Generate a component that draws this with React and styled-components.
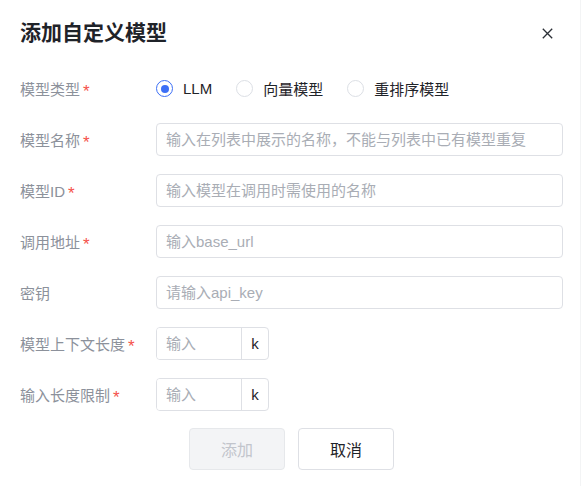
import React, { useState } from 'react';
import styled, { createGlobalStyle } from 'styled-components';

const GlobalStyle = createGlobalStyle`
  html, body {
    margin: 0;
    background: #ffffff;
  }
  body {
    font-family: "Liberation Sans", "Noto Sans CJK SC", sans-serif;
    color: #1f2329;
  }
  * { box-sizing: border-box; }
`;

const Dialog = styled.div`
  width: 581px;
  height: 486px;
  padding: 20px 17px 0 20px;
  background: #ffffff;
  border-right: 1px solid #f3f4f5;
`;

const Header = styled.div`
  display: flex;
  align-items: center;
  justify-content: space-between;
  height: 26px;
`;

const Title = styled.h2`
  margin: 0;
  font-size: 21px;
  line-height: 26px;
  font-weight: 700;
  color: #1f2329;
`;

const CloseButton = styled.button`
  width: 20px;
  height: 20px;
  margin-right: 6px;
  padding: 0;
  border: none;
  background: transparent;
  display: flex;
  align-items: center;
  justify-content: center;
  cursor: pointer;
`;

const Form = styled.div`
  display: flex;
  flex-direction: column;
  gap: 18px;
  margin-top: 26px;
`;

const Row = styled.div`
  display: flex;
  align-items: center;
  height: 33px;
`;

const Label = styled.div`
  width: 136px;
  flex-shrink: 0;
  display: flex;
  align-items: center;
  font-size: 15px;
  color: #8c919b;
  white-space: nowrap;
`;

const Required = styled.span`
  display: inline-block;
  margin-left: 3px;
  color: #f5514b;
  font-family: "Liberation Sans", sans-serif;
  font-size: 17px;
  transform: translateY(3px);
`;

const RadioGroup = styled.div`
  display: flex;
  align-items: center;
  gap: 24px;
`;

const RadioItem = styled.label`
  display: flex;
  align-items: center;
  gap: 10px;
  font-size: 15px;
  color: #1f2329;
  cursor: pointer;
`;

const RadioCircle = styled.span`
  width: 17px;
  height: 17px;
  border-radius: 50%;
  border: 1px solid ${p => (p.$checked ? '#3c6ff6' : '#dcdfe5')};
  display: flex;
  align-items: center;
  justify-content: center;
  &::after {
    content: '';
    width: 8px;
    height: 8px;
    border-radius: 50%;
    background: ${p => (p.$checked ? '#3c6ff6' : 'transparent')};
  }
`;

const TextInput = styled.input`
  flex: 1;
  height: 33px;
  padding: 0 9px;
  border: 1px solid #dee0e5;
  border-radius: 4px;
  font-family: inherit;
  font-size: 15px;
  color: #1f2329;
  outline: none;
  &::placeholder {
    color: #a9adb5;
  }
`;

const NumberGroup = styled.div`
  display: flex;
  width: 113px;
  height: 33px;
  border: 1px solid #dee0e5;
  border-radius: 4px;
  overflow: hidden;
`;

const NumberInput = styled.input`
  width: 85px;
  height: 100%;
  padding: 0 9px;
  border: none;
  border-right: 1px solid #dee0e5;
  font-family: inherit;
  font-size: 15px;
  outline: none;
  &::placeholder {
    color: #a9adb5;
  }
`;

const Suffix = styled.span`
  flex: 1;
  display: flex;
  align-items: center;
  justify-content: center;
  font-size: 15px;
  color: #1f2329;
`;

const Footer = styled.div`
  display: flex;
  justify-content: center;
  gap: 13px;
  margin-top: 17px;
`;

const Button = styled.button`
  width: 96px;
  height: 42px;
  border-radius: 4px;
  font-family: inherit;
  font-size: 16px;
  border: 1px solid ${p => (p.$disabled ? '#e6e8eb' : '#dee0e5')};
  background: ${p => (p.$disabled ? '#f3f4f6' : '#ffffff')};
  color: ${p => (p.$disabled ? '#c2c5cc' : '#1f2329')};
  cursor: ${p => (p.$disabled ? 'not-allowed' : 'pointer')};
`;

const CloseIcon = () => (
  <svg width="11" height="11" viewBox="0 0 11 11">
    <path d="M0.8 0.8 L10.2 10.2 M10.2 0.8 L0.8 10.2" stroke="#2b2f36" strokeWidth="1.3" fill="none" />
  </svg>
);

const types = ['LLM', '向量模型', '重排序模型'];

const fields = [
  { label: '模型名称', required: true, placeholder: '输入在列表中展示的名称，不能与列表中已有模型重复' },
  { label: '模型ID', required: true, placeholder: '输入模型在调用时需使用的名称' },
  { label: '调用地址', required: true, placeholder: '输入base_url' },
  { label: '密钥', required: false, placeholder: '请输入api_key' },
];

const limits = ['模型上下文长度', '输入长度限制'];

export default function App() {
  const [type, setType] = useState('LLM');

  return (
    <>
      <GlobalStyle />
      <Dialog>
        <Header>
          <Title>添加自定义模型</Title>
          <CloseButton aria-label="关闭"><CloseIcon /></CloseButton>
        </Header>

        <Form>
          <Row>
            <Label>模型类型<Required>*</Required></Label>
            <RadioGroup>
              {types.map(t => (
                <RadioItem key={t} onClick={() => setType(t)}>
                  <RadioCircle $checked={type === t} />
                  {t}
                </RadioItem>
              ))}
            </RadioGroup>
          </Row>

          {fields.map(f => (
            <Row key={f.label}>
              <Label>{f.label}{f.required && <Required>*</Required>}</Label>
              <TextInput placeholder={f.placeholder} />
            </Row>
          ))}

          {limits.map(l => (
            <Row key={l}>
              <Label>{l}<Required>*</Required></Label>
              <NumberGroup>
                <NumberInput placeholder="输入" />
                <Suffix>k</Suffix>
              </NumberGroup>
            </Row>
          ))}
        </Form>

        <Footer>
          <Button $disabled>添加</Button>
          <Button>取消</Button>
        </Footer>
      </Dialog>
    </>
  );
}
